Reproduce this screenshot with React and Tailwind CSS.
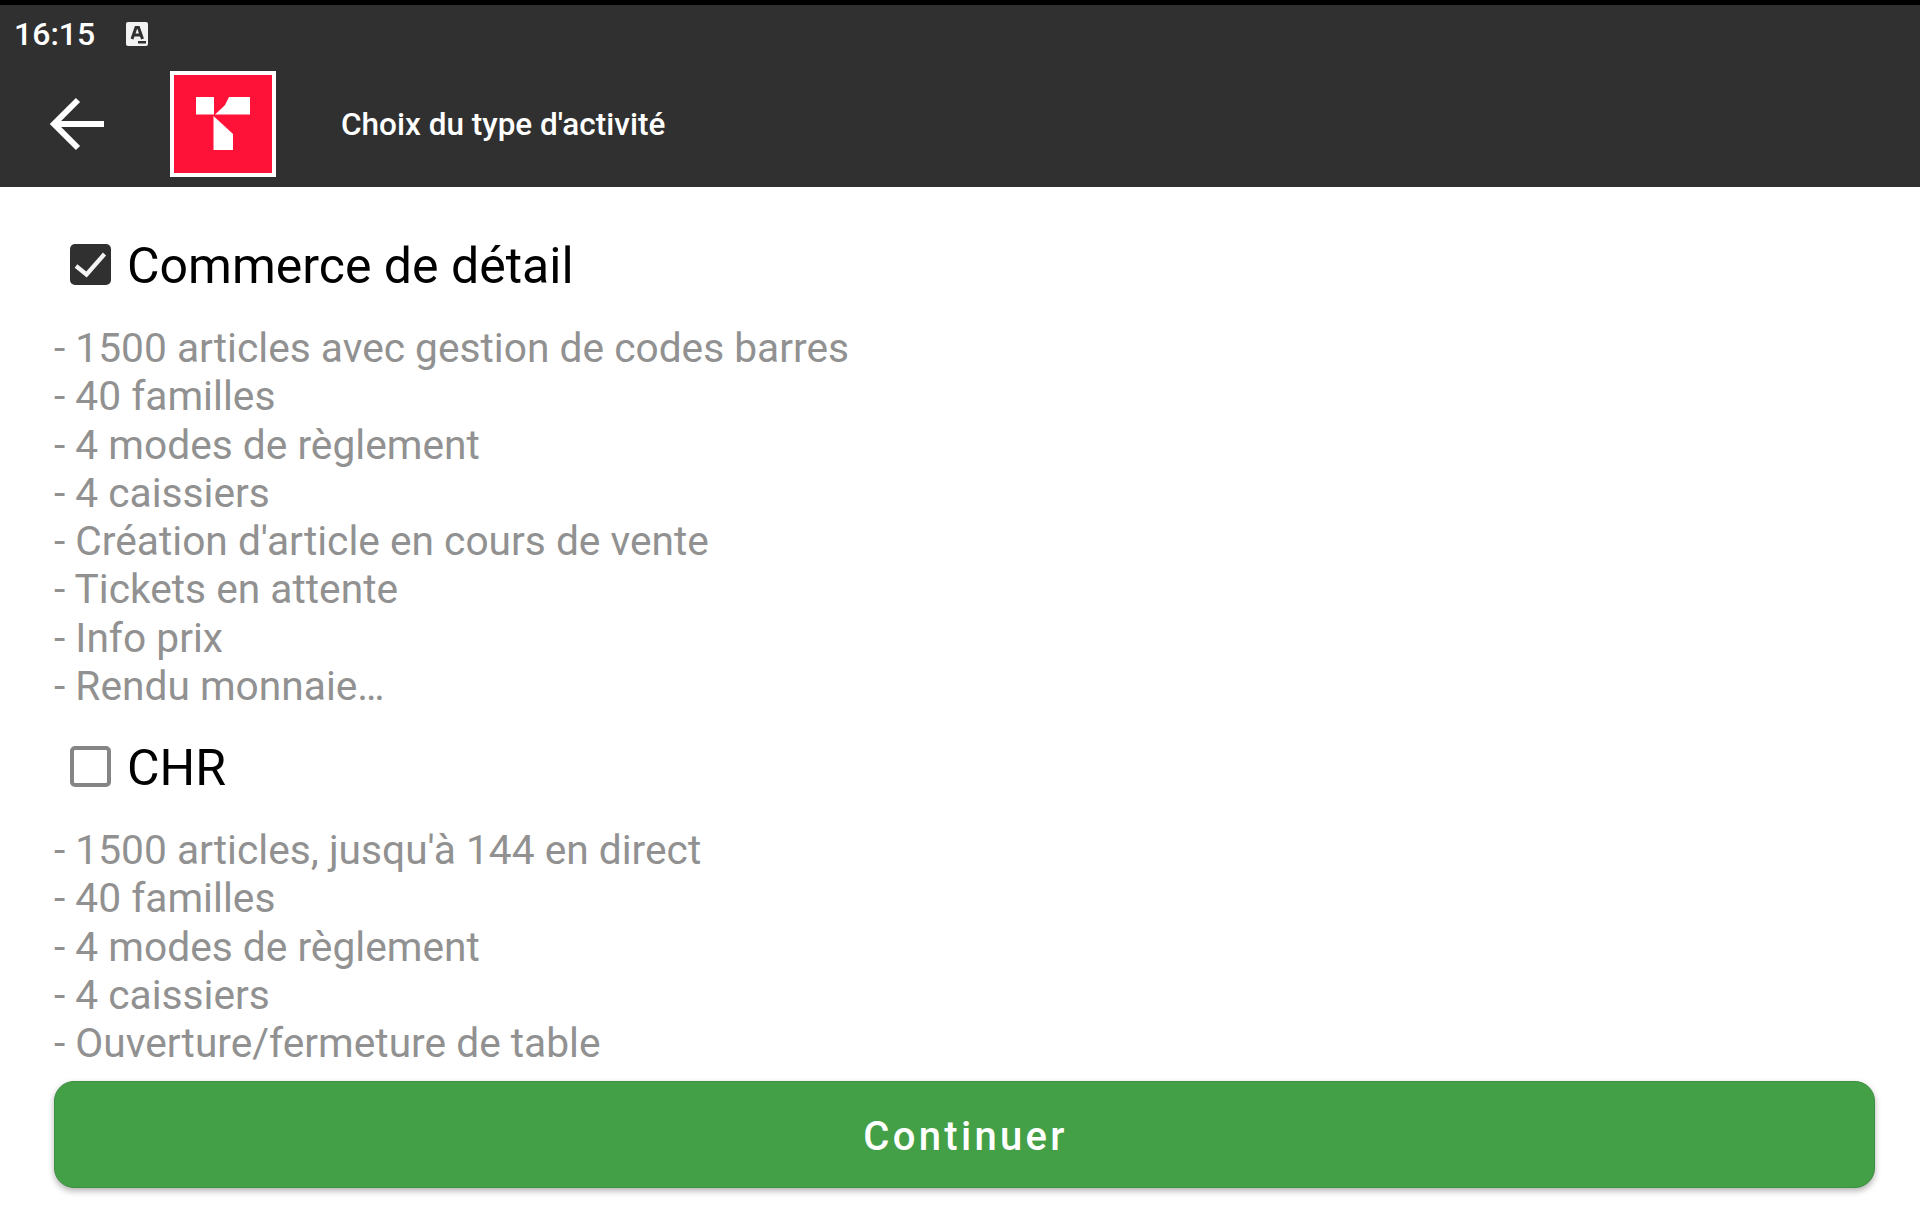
import React from "react";

const commerce = [
  "- 1500 articles avec gestion de codes barres",
  "- 40 familles",
  "- 4 modes de règlement",
  "- 4 caissiers",
  "- Création d'article en cours de vente",
  "- Tickets en attente",
  "- Info prix",
  "- Rendu monnaie…",
];

const chr = [
  "- 1500 articles, jusqu'à 144 en direct",
  "- 40 familles",
  "- 4 modes de règlement",
  "- 4 caissiers",
  "- Ouverture/fermeture de table",
];

function Option({ label, checked, lines }) {
  return (
    <section>
      <div className="flex items-center h-[80px] pl-[16px]">
        {checked ? (
          <span className="w-[41px] h-[41px] mt-[-3px] rounded-[5px] bg-[#303030]">
            <svg width="41" height="41" viewBox="0 0 41 41" fill="none" stroke="#f4f4f4" strokeWidth="4.2">
              <path d="M6 22 L16.5 30.5 L34.5 10" />
            </svg>
          </span>
        ) : (
          <span className="w-[41px] h-[41px] mt-[-3px] rounded-[5px] border-[4px] border-[#858585]" />
        )}
        <span className="ml-[16px] text-[50px] leading-[56px] text-black">{label}</span>
      </div>
      <div className="mt-[18px] text-[40.7px] leading-[48.25px] text-[#919191]">
        {lines.map((line, i) => (
          <div key={i}>{line}</div>
        ))}
      </div>
    </section>
  );
}

export default function App() {
  return (
    <div className="w-[1920px] h-[1210px] bg-white flex flex-col overflow-hidden font-['Roboto',sans-serif]">
      <div className="h-[5px] bg-black" />
      <div className="h-[57px] bg-[#303030] flex items-center pl-[14px] text-white">
        <span className="text-[32px] leading-none font-medium">16:15</span>
        <svg className="ml-[31px]" width="22" height="24" viewBox="0 0 22 24">
          <rect x="0" y="0" width="22" height="24" rx="2" fill="#f2f2f2" />
          <path d="M6 17 L10 5.5 L12.5 5.5 L16.5 17 M7.5 13 H15" fill="none" stroke="#303030" strokeWidth="3" />
          <rect x="12" y="19" width="8" height="2.5" fill="#303030" />
        </svg>
      </div>
      <header className="h-[125px] pb-[2px] bg-[#303030] flex items-center text-white">
        <div className="w-[170px] flex justify-center">
          <svg className="ml-[-16px]" width="54" height="54" viewBox="0 0 54 54" fill="none" stroke="white" strokeWidth="6">
            <path d="M54 27 H4" />
            <path d="M28 3 L4 27 L28 51" />
          </svg>
        </div>
        <div className="w-[106px] h-[106px] border-[4px] border-white bg-[#ff1238] flex items-center justify-center">
          <svg width="54" height="53" viewBox="0 0 54 53" fill="white">
            <path d="M0 0 H18 V17.5 H0 Z" />
            <path d="M33 0 H54 V17.5 H19 L26 11 L29 8 Z" />
            <path d="M17.5 19 L37 37 V53 H17.5 Z" />
          </svg>
        </div>
        <h1 className="ml-[65px] mt-[3px] text-[31.5px] font-medium leading-none">Choix du type d'activité</h1>
      </header>
      <main className="flex-1 px-[54px] flex flex-col">
        <div className="pt-[39px] flex flex-col gap-[18px]">
          <Option label="Commerce de détail" checked lines={commerce} />
          <Option label="CHR" lines={chr} />
        </div>
        <button className="mt-auto mb-[22px] w-[1821px] h-[107px] pt-[4px] pl-[2px] rounded-[20px] bg-[#43a047] border border-[#3d8f41] shadow-[0_3px_6px_rgba(0,0,0,0.3)] text-white text-[40px] font-medium tracking-[3.3px]">
          Continuer
        </button>
      </main>
    </div>
  );
}
